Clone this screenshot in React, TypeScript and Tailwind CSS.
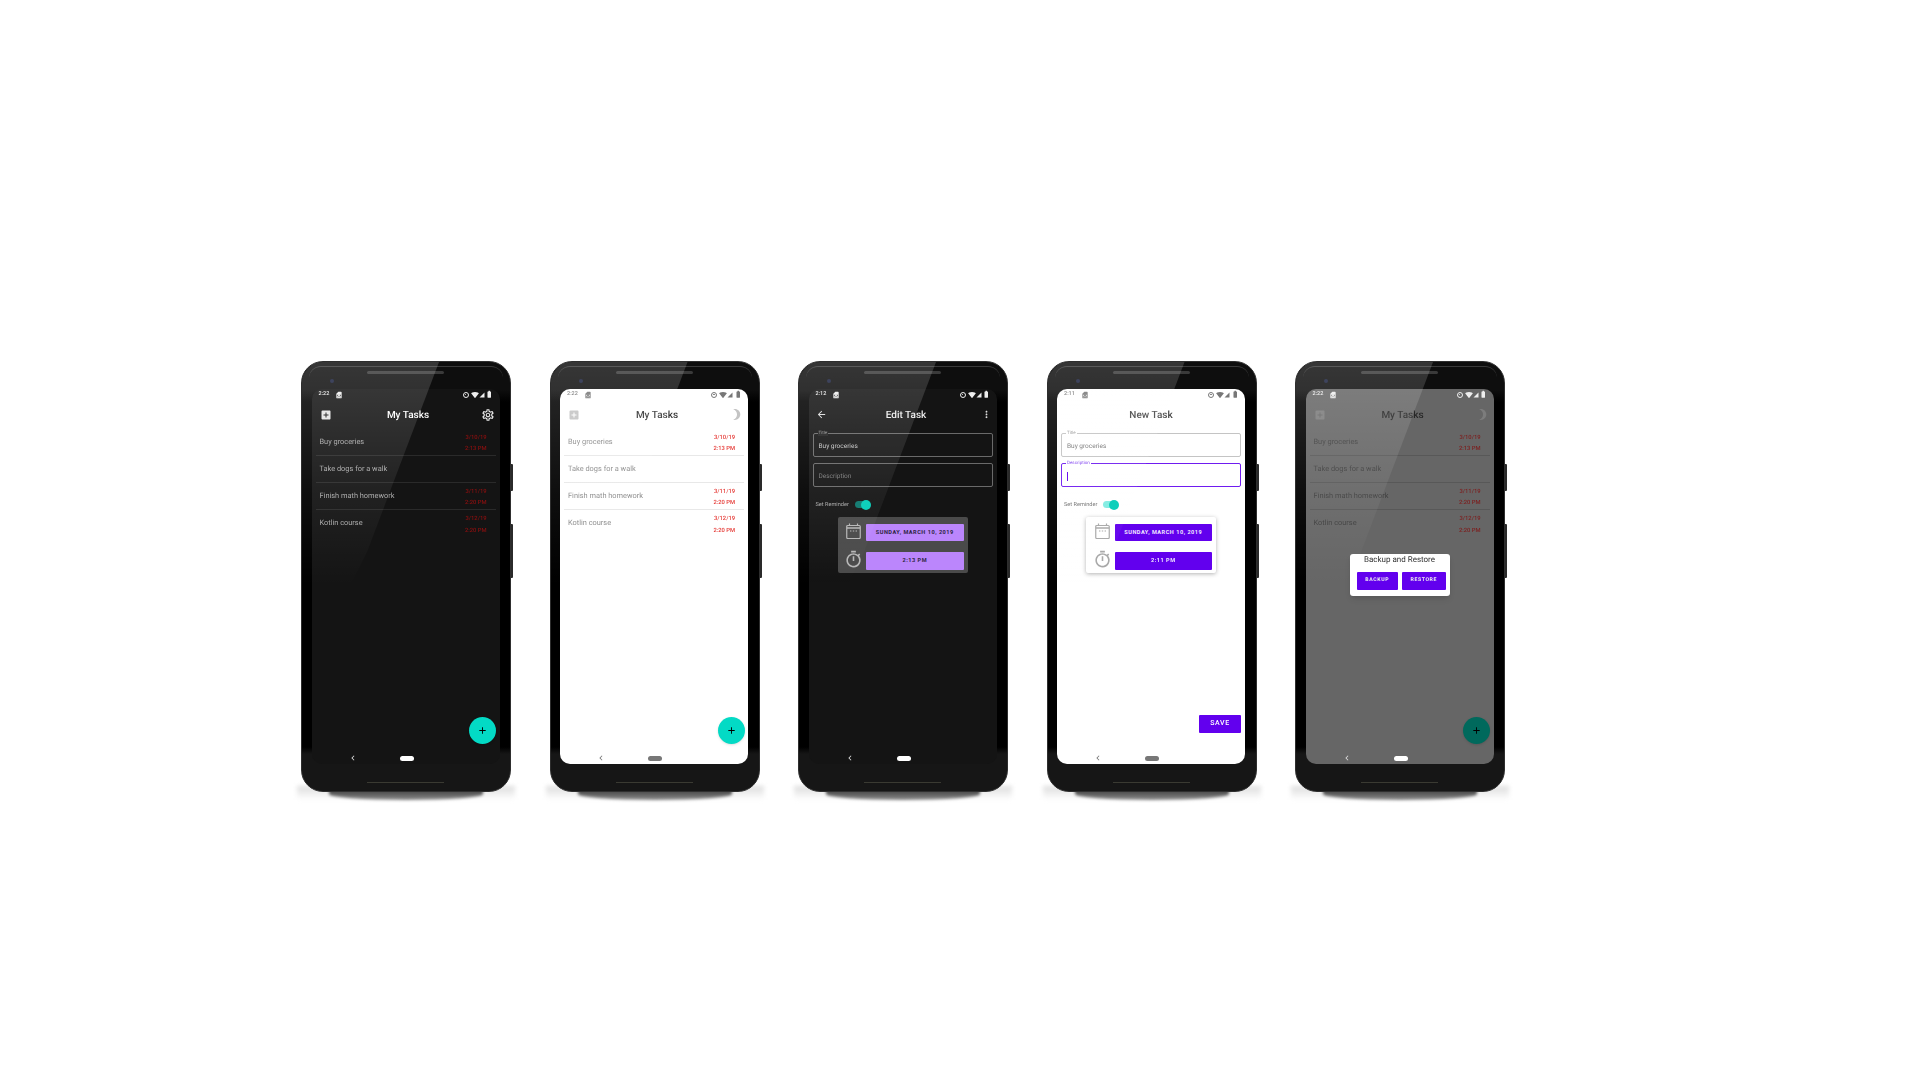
import type { ReactNode } from 'react';
import {
  MdAdd,
  MdAddBox,
  MdArrowBack,
  MdBatteryFull,
  MdBrightness3,
  MdChevronLeft,
  MdMoreVert,
  MdOutlineSettings,
  MdOutlineTimer,
  MdSignalCellular4Bar,
  MdSignalWifi4Bar,
  MdSimCard,
} from 'react-icons/md';

type Mode = 'dark' | 'light' | 'dim';

const tasks = [
  { title: 'Buy groceries', date: '3/10/19', time: '2:13 PM' },
  { title: 'Take dogs for a walk' },
  { title: 'Finish math homework', date: '3/11/19', time: '2:20 PM' },
  { title: 'Kotlin course', date: '3/12/19', time: '2:20 PM' },
];

const StatusBar = ({ time, light, showSim = true }: { time: string; light?: boolean; showSim?: boolean }) => (
  <div className={`flex h-[12px] shrink-0 items-center pr-[6px] pl-[7px] text-[5.5px] font-medium ${light ? 'text-[#777]' : 'text-[#eee]'}`}>
    <span className="w-[16.5px]">{time}</span>
    {showSim && <MdSimCard className="size-[8px]" />}
    <div className="ml-auto flex items-center">
      <span className={`flex size-[6px] items-center justify-center rounded-full border-[0.8px] ${light ? 'border-[#777]' : 'border-[#eee]'}`}>
        <span className={`size-[1.5px] rounded-full ${light ? 'bg-[#777]' : 'bg-[#eee]'}`} />
      </span>
      <MdSignalWifi4Bar className="ml-[2px] size-[8px]" />
      <MdSignalCellular4Bar className="size-[6px]" />
      <MdBatteryFull className="ml-[0.5px] size-[8.5px]" />
    </div>
  </div>
);

const NavBar = ({ light }: { light?: boolean }) => (
  <div className="relative flex h-[11px] shrink-0 items-center">
    <MdChevronLeft className={`ml-[36px] size-[10px] ${light ? 'text-[#777]' : 'text-[#ddd]'}`} />
    <span className={`ml-[42px] h-[5px] w-[14px] rounded-full ${light ? 'bg-[#777]' : 'bg-white'}`} />
  </div>
);

const Fab = ({ dim }: { dim?: boolean }) => (
  <button
    type="button"
    className={`absolute right-[3.5px] bottom-[20px] flex size-[27px] items-center justify-center rounded-full shadow-sm ${dim ? 'bg-[#00695c]' : 'bg-[#03dac5]'}`}
  >
    <MdAdd className="size-[11px] text-black" />
  </button>
);

const TaskScreen = ({ mode }: { mode: Mode }) => {
  const isDark = mode === 'dark';
  const isDim = mode === 'dim';
  const titleColor = isDark ? 'text-white' : isDim ? 'text-[#262626]' : 'text-[#333]';
  const rowColor = isDark ? 'text-[#a8a8a8]' : isDim ? 'text-[#404040]' : 'text-[#8c8c8c]';
  const dateColor = isDark ? 'text-[#8a0f0f]' : isDim ? 'text-[#7c1f1f]' : 'text-[#e53935]';
  const divider = isDark ? 'border-[#2a2a2a]' : isDim ? 'border-[#585858]' : 'border-[#e8e8e8]';
  const iconColor = isDark ? 'text-[#e6e6e6]' : isDim ? 'text-[#7c7c7c]' : 'text-[#c4c4c4]';

  return (
    <>
      <StatusBar time="2:22" light={mode === 'light'} />
      <div className="flex h-[28px] shrink-0 items-center justify-between pr-[5px] pl-[8px]">
        <MdAddBox className={`size-[12px] ${iconColor}`} />
        <span className={`mt-[2px] ml-[4px] text-[10px] font-medium ${titleColor}`}>My Tasks</span>
        {isDark
          ? <MdOutlineSettings className={`size-[14px] ${iconColor}`} />
          : <MdBrightness3 className={`size-[13px] ${iconColor}`} />}
      </div>
      <div className="flex-1 px-[4px]">
        {tasks.map((task, i) => (
          <div
            key={task.title}
            className={`flex h-[27px] items-center justify-between pr-[9px] pl-[4px] ${i < 3 ? `border-b-[0.7px] ${divider}` : ''}`}
          >
            <span className={`text-[7.4px] ${rowColor}`}>{task.title}</span>
            {task.date && (
              <div className={`flex flex-col items-end gap-[4.5px] pt-[5px] text-[5.8px] leading-[7px] font-medium ${dateColor}`}>
                <span>{task.date}</span>
                <span>{task.time}</span>
              </div>
            )}
          </div>
        ))}
      </div>
      <Fab dim={isDim} />
      <NavBar light={mode === 'light'} />
    </>
  );
};

const Field = ({ label, value, dark, focused, cursor }: { label: string; value?: string; dark?: boolean; focused?: boolean; cursor?: boolean }) => {
  const border = focused
    ? 'border-[1.2px] border-[#6f1cf0]'
    : dark ? 'border-[0.7px] border-[#6a6a6a]' : 'border-[0.7px] border-[#c4c4c4]';
  return (
    <div className={`relative flex h-[24px] items-center rounded-[2px] pt-[4px] pl-[5px] ${border}`}>
      <span
        className={`absolute top-[-3px] left-[4px] px-[1px] text-[4.5px] leading-[5px] ${
          focused ? 'bg-white text-[#7c3cf0]' : dark ? 'bg-[#202020] text-[#8c8c8c]' : 'bg-white text-[#999]'
        }`}
      >
        {label}
      </span>
      {cursor && <span className="h-[9px] w-[0.8px] bg-[#6200ee]" />}
      {value && <span className={`text-[6.5px] ${dark ? 'text-[#c4c4c4]' : 'text-[#777]'}`}>{value}</span>}
    </div>
  );
};

const CalendarIcon = () => (
  <svg width="15" height="16" viewBox="0 0 15 16" fill="none" stroke="currentColor">
    <rect x="0.75" y="2.5" width="13.5" height="13" rx="1" strokeWidth="1.2" />
    <path d="M0.75 5h13.5" strokeWidth="1.4" />
    <path d="M3.5 0.5v2.5M11.5 0.5v2.5" strokeWidth="1.2" />
    <path d="M4 8h1.4M6.8 8h1.4M9.6 8h1.4" strokeWidth="1.2" />
  </svg>
);

const FormScreen = ({ dark, title, time }: { dark?: boolean; title: string; time: string }) => (
  <>
    <StatusBar time={time} light={!dark} showSim={dark} />
    <div className="relative flex h-[28px] shrink-0 items-center justify-center px-[5px]">
      {dark && <MdArrowBack className="absolute left-[7px] size-[11px] text-[#ddd]" />}
      <span className={`${dark ? 'ml-[7px] text-[#eee]' : 'text-[#444]'} mt-[2px] text-[10px] font-medium`}>{title}</span>
      {dark && <MdMoreVert className="absolute right-[5px] size-[11px] text-[#ddd]" />}
    </div>
    <div className="flex flex-1 flex-col px-[4px] pt-[4px]">
      {dark ? <Field label="Title" value="Buy groceries" dark /> : <Field label="Title" value="Buy groceries" />}
      <div className="mt-[6px]">
        {dark
          ? <div className="flex h-[24px] items-center rounded-[2px] border-[0.7px] border-[#6a6a6a] pt-[4px] pl-[5px] text-[6.5px] text-[#7a7a7a]">Description</div>
          : <Field label="Description" focused cursor />}
      </div>
      <div className="mt-[12px] flex h-[12px] items-center pl-[3px]">
        <span className={`pt-[1px] text-[5.6px] ${dark ? 'text-[#a8a8a8]' : 'text-[#777]'}`}>Set Reminder</span>
        <div className="relative ml-[6px] h-[7px] w-[14px] rounded-full bg-[#03dac5]/50">
          <span className="absolute top-[-1.5px] right-[-2px] size-[10px] rounded-full bg-[#03cdb8]" />
        </div>
      </div>
      <div className={`mx-auto mt-[6px] flex w-[130px] flex-col gap-[11px] rounded-[2px] p-[3.5px] pt-[7px] pr-[4px] pb-[3px] ${dark ? 'bg-[#4a4a4a]' : 'bg-white shadow-[0_1px_4px_rgba(0,0,0,0.3)]'}`}>
        <PickerRow dark={dark} icon={<CalendarIcon />} label="SUNDAY, MARCH 10, 2019" />
        <PickerRow dark={dark} icon={<MdOutlineTimer className="size-[19px]" />} label={time === '2:12' ? '2:13 PM' : '2:11 PM'} />
      </div>
      {!dark && (
        <button type="button" className="mt-auto mb-[20px] ml-auto h-[18px] w-[42px] rounded-[1px] bg-[#6200ee] text-[7px] font-medium tracking-[0.6px] text-white">
          SAVE
        </button>
      )}
    </div>
    <NavBar light={!dark} />
  </>
);

const PickerRow = ({ dark, icon, label }: { dark?: boolean; icon: ReactNode; label: string }) => (
  <div className="flex items-center">
    <span className={`-mt-[2px] flex w-[25px] shrink-0 justify-center ${dark ? 'text-[#b8b8b8]' : 'text-[#a8a8a8]'}`}>{icon}</span>
    <span className={`flex h-[17.5px] flex-1 items-center justify-center rounded-[1px] pt-[1px] text-[5.6px] font-bold tracking-[0.5px] ${dark ? 'bg-[#bb86fc] text-[#2c2440]' : 'bg-[#6200ee] text-[#f2e8ff]'}`}>
      {label}
    </span>
  </div>
);

const BackupDialog = () => (
  <div className="absolute top-[165px] left-[44px] w-[100px] rounded-[3px] bg-white px-[4px] pt-[1px] pb-[6px] shadow-md">
    <p className="text-center text-[8px] leading-[10px] text-[#333]">Backup and Restore</p>
    <div className="mt-[7px] flex gap-[4px] pl-[3px]">
      <span className="flex h-[18px] w-[42px] items-center justify-center rounded-[1px] bg-[#6200ee] text-[5.2px] font-bold tracking-[0.6px] text-[#eee]">BACKUP</span>
      <span className="flex h-[18px] w-[44px] items-center justify-center rounded-[1px] bg-[#6200ee] text-[5.2px] font-bold tracking-[0.6px] text-[#eee]">RESTORE</span>
    </div>
  </div>
);

const Phone = ({ screenClass, children }: { screenClass: string; children: ReactNode }) => (
  <div className="relative h-[431px] w-[210px] shrink-0">
    {/* soft shadow under the device */}
    <div className="absolute right-[-4px] bottom-[-8px] left-[-4px] h-[14px] bg-[linear-gradient(180deg,#dddddd,#ffffff)] blur-[2px]" />
    <div className="absolute right-[28px] bottom-[-8px] left-[28px] h-[12px] rounded-b-[50%] bg-[linear-gradient(180deg,#333333,#8a8a8a)] blur-[1.5px]" />
    {/* volume and power keys */}
    <div className="absolute top-[103px] right-[-2px] h-[27px] w-[3px] rounded-r-[1px] bg-[#2a2a2a]" />
    <div className="absolute top-[163px] right-[-2px] h-[54px] w-[3px] rounded-r-[1px] bg-[#2a2a2a]" />
    <div className="relative flex h-full flex-col overflow-hidden rounded-[22px] border-[1.5px] border-[#2e2e2e] bg-[linear-gradient(180deg,#0e0e0e_0,#0e0e0e_28px,#000_40px,#000_385px,#161616_392px)] pt-[26.5px] pr-[8.5px] pb-[25.5px] pl-[9.5px]">
      <div className="absolute top-[4px] right-[7px] left-[7px] h-[12px] rounded-t-[16px] border-t-[0.8px] border-[#3a3a3a]" />
      <div className="absolute top-[8.5px] left-[65px] h-[3px] w-[77px] rounded-full bg-[#3a3a3a]" />
      <div className="absolute top-[17px] left-[28px] size-[4px] rounded-full bg-[#1b2240]" />
      <div className="absolute bottom-[8px] left-[65px] h-[1px] w-[77px] bg-[#3a3a32]" />
      <div className={`relative flex h-[375px] w-[188px] flex-col overflow-hidden rounded-[10px] blur-[0.25px] ${screenClass}`}>
        {children}
      </div>
      {/* glass reflection */}
      <div className="pointer-events-none absolute inset-0 bg-[linear-gradient(180deg,rgba(255,255,255,0.17),rgba(255,255,255,0.06)_30%,rgba(255,255,255,0)_52%)] [clip-path:polygon(0_0,137px_0,65px_190px,40px_240px,0_240px)]" />
    </div>
  </div>
);

export default function App() {
  return (
    <div className="flex min-h-[1080px] gap-[38.5px] bg-white pt-[361px] pl-[301px] font-['Roboto',sans-serif] [text-rendering:geometricPrecision]">
      <Phone screenClass="bg-[#141414]">
        <TaskScreen mode="dark" />
      </Phone>
      <Phone screenClass="bg-white">
        <TaskScreen mode="light" />
      </Phone>
      <Phone screenClass="bg-[#141414]">
        <FormScreen dark title="Edit Task" time="2:12" />
      </Phone>
      <Phone screenClass="bg-white">
        <FormScreen title="New Task" time="2:11" />
      </Phone>
      <Phone screenClass="bg-[#666666]">
        <TaskScreen mode="dim" />
        <BackupDialog />
      </Phone>
    </div>
  );
}
